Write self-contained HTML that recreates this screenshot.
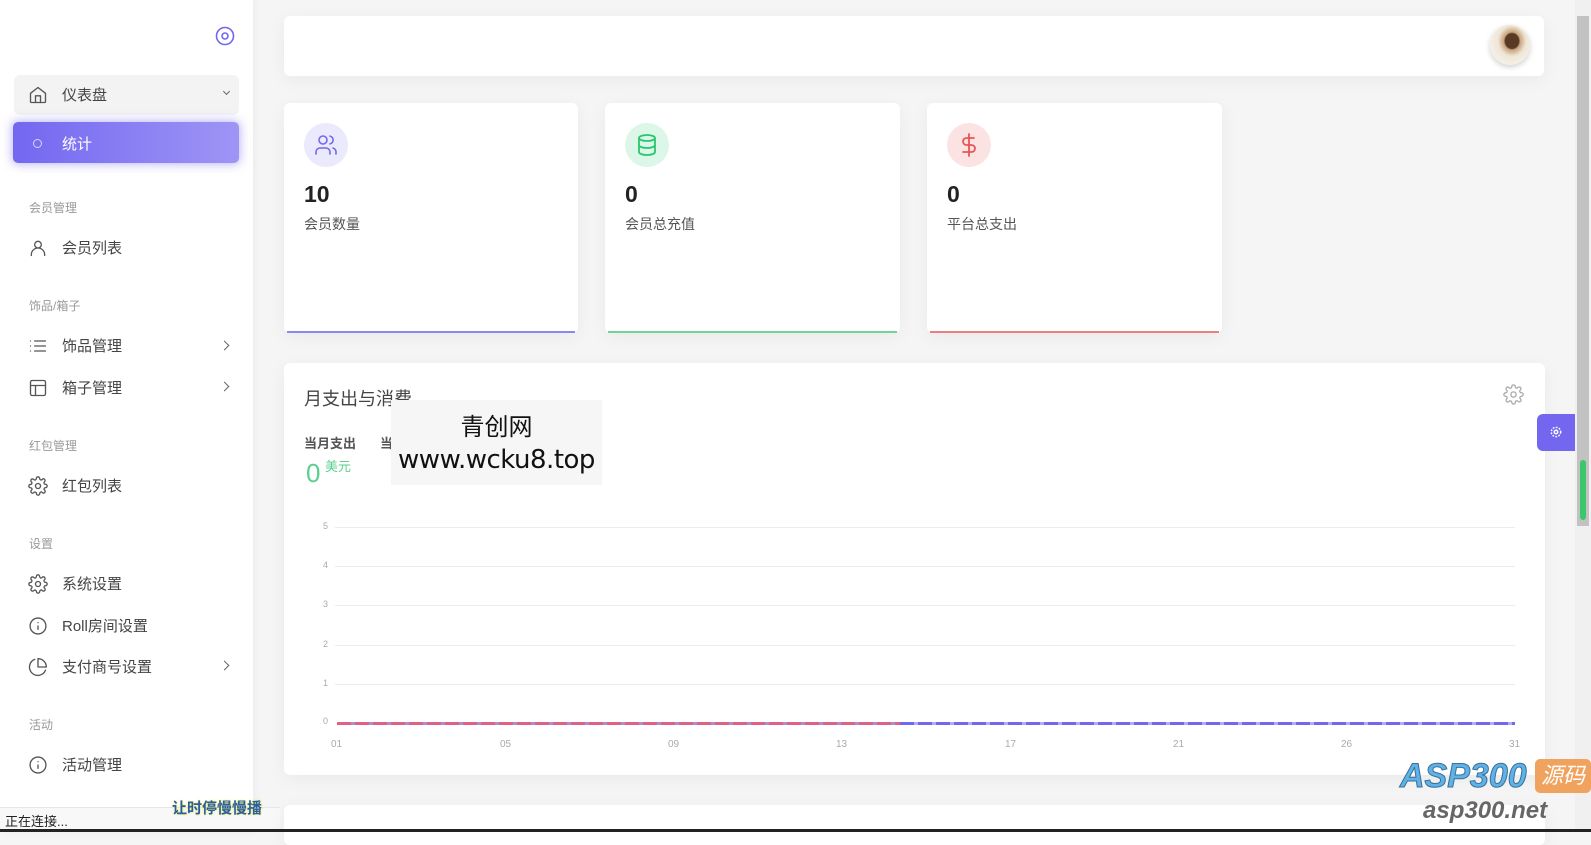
<!DOCTYPE html>
<html><head><meta charset="utf-8"><style>
*{box-sizing:border-box;margin:0;padding:0}
body{width:1591px;height:832px;overflow:hidden;background:#f5f5f6;font-family:"Liberation Sans","Noto Sans CJK SC",sans-serif;color:#444;position:relative}
.abs{position:absolute}
#side{left:0;top:0;width:253px;height:832px;background:#fff;box-shadow:2px 0 8px rgba(0,0,0,.04)}
.item{position:absolute;left:28px;font-size:15px;color:#444;display:flex;align-items:center}
.item svg{width:20px;height:20px;margin-right:14px;fill:none;stroke:#555;stroke-width:1.6;stroke-linecap:round;stroke-linejoin:round}
.sec{position:absolute;left:29px;font-size:12px;color:#999}
.chev{position:absolute;left:221px;width:7px;height:7px;border-right:1.5px solid #666;border-bottom:1.5px solid #666;transform:rotate(-45deg)}
.card{position:absolute;background:#fff;border-radius:6px;box-shadow:0 4px 18px rgba(0,0,0,.05)}
.ic{position:absolute;left:20px;top:20px;width:44px;height:44px;border-radius:50%;display:flex;align-items:center;justify-content:center}
.num{position:absolute;left:20px;top:78px;font-size:23px;font-weight:bold;color:#222}
.lab{position:absolute;left:20px;top:111px;font-size:14px;color:#555}
.bar{position:absolute;left:3px;right:3px;bottom:0;height:2px}
.yl{position:absolute;left:318px;font-size:9px;color:#aaa;width:10px;text-align:right}
.gl{position:absolute;left:335px;width:1180px;height:1px;background:#ececec}
.xl{position:absolute;top:739px;font-size:10px;color:#aaa}
</style></head><body>
<div id="side" class="abs">
 <svg class="abs" style="left:215px;top:26px" width="20" height="20" viewBox="0 0 20 20"><circle cx="10" cy="10" r="8.5" fill="none" stroke="#7367f0" stroke-width="1.6"/><circle cx="10" cy="10" r="3" fill="none" stroke="#7367f0" stroke-width="1.6"/></svg>
 <div class="abs" style="left:14px;top:75px;width:225px;height:40px;background:#f3f3f4;border-radius:6px"></div>
 <div class="item" style="top:84px"><svg viewBox="0 0 24 24"><path d="M3 10l9-7 9 7v10a1 1 0 0 1-1 1H4a1 1 0 0 1-1-1z"/><path d="M9 21v-8h6v8"/></svg>仪表盘</div>
 <div class="chev" style="top:89px;transform:rotate(45deg);width:5px;height:5px;left:224px"></div>
 <div class="abs" style="left:13px;top:122px;width:226px;height:41px;border-radius:5px;background:linear-gradient(90deg,#7367f0,#9e95f5);box-shadow:0 0 10px 1px rgba(115,103,240,.5)"></div>
 <div class="abs" style="left:33px;top:139px;width:9px;height:9px;border:1.5px solid #d9d5fb;border-radius:50%"></div>
 <div class="abs" style="left:62px;top:133px;font-size:15px;color:#fff">统计</div>
 <div class="sec" style="top:199px">会员管理</div>
 <div class="item" style="top:237px"><svg viewBox="0 0 24 24"><circle cx="12" cy="8" r="4"/><path d="M4 21v-1a7 7 0 0 1 16 0v1"/></svg>会员列表</div>
 <div class="sec" style="top:297px">饰品/箱子</div>
 <div class="item" style="top:335px"><svg viewBox="0 0 24 24"><path d="M8 6h13M8 12h13M8 18h13M3 6h.01M3 12h.01M3 18h.01"/></svg>饰品管理</div>
 <div class="chev" style="top:342px"></div>
 <div class="item" style="top:377px"><svg viewBox="0 0 24 24"><rect x="3" y="3" width="18" height="18" rx="2"/><path d="M3 9h18M9 21V9"/></svg>箱子管理</div>
 <div class="chev" style="top:383px"></div>
 <div class="sec" style="top:437px">红包管理</div>
 <div class="item" style="top:475px"><svg viewBox="0 0 24 24"><circle cx="12" cy="12" r="3"/><path d="M19.4 15a1.7 1.7 0 0 0 .3 1.8l.1.1a2 2 0 1 1-2.8 2.8l-.1-.1a1.7 1.7 0 0 0-1.8-.3 1.7 1.7 0 0 0-1 1.5V21a2 2 0 1 1-4 0v-.1a1.7 1.7 0 0 0-1.1-1.5 1.7 1.7 0 0 0-1.8.3l-.1.1a2 2 0 1 1-2.8-2.8l.1-.1a1.7 1.7 0 0 0 .3-1.8 1.7 1.7 0 0 0-1.5-1H3a2 2 0 1 1 0-4h.1a1.7 1.7 0 0 0 1.5-1.1 1.7 1.7 0 0 0-.3-1.8l-.1-.1a2 2 0 1 1 2.8-2.8l.1.1a1.7 1.7 0 0 0 1.8.3H9a1.7 1.7 0 0 0 1-1.5V3a2 2 0 1 1 4 0v.1a1.7 1.7 0 0 0 1 1.5 1.7 1.7 0 0 0 1.8-.3l.1-.1a2 2 0 1 1 2.8 2.8l-.1.1a1.7 1.7 0 0 0-.3 1.8V9a1.7 1.7 0 0 0 1.5 1H21a2 2 0 1 1 0 4h-.1a1.7 1.7 0 0 0-1.5 1z"/></svg>红包列表</div>
 <div class="sec" style="top:535px">设置</div>
 <div class="item" style="top:573px"><svg viewBox="0 0 24 24"><circle cx="12" cy="12" r="3"/><path d="M19.4 15a1.7 1.7 0 0 0 .3 1.8l.1.1a2 2 0 1 1-2.8 2.8l-.1-.1a1.7 1.7 0 0 0-1.8-.3 1.7 1.7 0 0 0-1 1.5V21a2 2 0 1 1-4 0v-.1a1.7 1.7 0 0 0-1.1-1.5 1.7 1.7 0 0 0-1.8.3l-.1.1a2 2 0 1 1-2.8-2.8l.1-.1a1.7 1.7 0 0 0 .3-1.8 1.7 1.7 0 0 0-1.5-1H3a2 2 0 1 1 0-4h.1a1.7 1.7 0 0 0 1.5-1.1 1.7 1.7 0 0 0-.3-1.8l-.1-.1a2 2 0 1 1 2.8-2.8l.1.1a1.7 1.7 0 0 0 1.8.3H9a1.7 1.7 0 0 0 1-1.5V3a2 2 0 1 1 4 0v.1a1.7 1.7 0 0 0 1 1.5 1.7 1.7 0 0 0 1.8-.3l.1-.1a2 2 0 1 1 2.8 2.8l-.1.1a1.7 1.7 0 0 0-.3 1.8V9a1.7 1.7 0 0 0 1.5 1H21a2 2 0 1 1 0 4h-.1a1.7 1.7 0 0 0-1.5 1z"/></svg>系统设置</div>
 <div class="item" style="top:615px"><svg viewBox="0 0 24 24"><circle cx="12" cy="12" r="9.5"/><path d="M12 16v-4M12 8h.01"/></svg>Roll房间设置</div>
 <div class="item" style="top:656px"><svg viewBox="0 0 24 24"><path d="M21 15.9A10 10 0 1 1 8 2.8"/><path d="M22 12A10 10 0 0 0 12 2v10z"/></svg>支付商号设置</div>
 <div class="chev" style="top:662px"></div>
 <div class="sec" style="top:716px">活动</div>
 <div class="item" style="top:754px"><svg viewBox="0 0 24 24"><circle cx="12" cy="12" r="9.5"/><path d="M12 16v-4M12 8h.01"/></svg>活动管理</div>
</div>
<div class="abs" style="left:0;top:807px;width:280px;height:22px;background:#f8f8f8;border-top:1px solid #e6e6e6;font-size:13px;color:#222;padding:3px 5px">正在连接...</div>
<div class="abs" style="left:172px;top:797px;font-size:15px;font-weight:bold;color:#2a5da8;text-shadow:0 0 2px #ee3">让时停慢慢播</div>

<div class="card" style="left:284px;top:16px;width:1260px;height:60px"></div>
<div class="abs" style="left:1490px;top:25px;width:40px;height:40px;border-radius:50%;background:radial-gradient(ellipse at 55% 40%,#5a3a25 0 22%,#c9a27c 26%,#efe6d6 45%,#f4efe6 70%);box-shadow:0 2px 6px rgba(0,0,0,.2)"></div>

<div class="card" style="left:284px;top:103px;width:294px;height:230px">
 <div class="ic" style="background:#ebe9fc"><svg width="24" height="24" viewBox="0 0 24 24" fill="none" stroke="#7367f0" stroke-width="1.6" stroke-linecap="round"><circle cx="9" cy="7" r="4"/><path d="M2 21v-2a4 4 0 0 1 4-4h6a4 4 0 0 1 4 4v2M16 3.1a4 4 0 0 1 0 7.8M22 21v-2a4 4 0 0 0-3-3.9"/></svg></div>
 <div class="num">10</div><div class="lab">会员数量</div><div class="bar" style="background:#8f87ef"></div></div>
<div class="card" style="left:605px;top:103px;width:295px;height:230px">
 <div class="ic" style="background:#dcf6e8"><svg width="24" height="24" viewBox="0 0 24 24" fill="none" stroke="#28c76f" stroke-width="1.8"><ellipse cx="12" cy="5" rx="8" ry="3"/><path d="M4 5v14c0 1.7 3.6 3 8 3s8-1.3 8-3V5M4 12c0 1.7 3.6 3 8 3s8-1.3 8-3"/></svg></div>
 <div class="num">0</div><div class="lab">会员总充值</div><div class="bar" style="background:#6fd39b"></div></div>
<div class="card" style="left:927px;top:103px;width:295px;height:230px">
 <div class="ic" style="background:#fbe3e4"><svg width="24" height="24" viewBox="0 0 24 24" fill="none" stroke="#ea5455" stroke-width="1.8" stroke-linecap="round"><path d="M12 1v22M17 5H9.5a3.5 3.5 0 0 0 0 7h5a3.5 3.5 0 0 1 0 7H6"/></svg></div>
 <div class="num">0</div><div class="lab">平台总支出</div><div class="bar" style="background:#ec7f7f"></div></div>

<div class="card" style="left:284px;top:363px;width:1261px;height:412px"></div>
<div class="abs" style="left:304px;top:385px;font-size:18px;color:#444">月支出与消费</div>
<svg class="abs" style="left:1503px;top:384px" width="21" height="21" viewBox="0 0 24 24" fill="none" stroke="#aaa" stroke-width="1.5"><circle cx="12" cy="12" r="3"/><path d="M19.4 15a1.7 1.7 0 0 0 .3 1.8l.1.1a2 2 0 1 1-2.8 2.8l-.1-.1a1.7 1.7 0 0 0-1.8-.3 1.7 1.7 0 0 0-1 1.5V21a2 2 0 1 1-4 0v-.1a1.7 1.7 0 0 0-1.1-1.5 1.7 1.7 0 0 0-1.8.3l-.1.1a2 2 0 1 1-2.8-2.8l.1-.1a1.7 1.7 0 0 0 .3-1.8 1.7 1.7 0 0 0-1.5-1H3a2 2 0 1 1 0-4h.1a1.7 1.7 0 0 0 1.5-1.1 1.7 1.7 0 0 0-.3-1.8l-.1-.1a2 2 0 1 1 2.8-2.8l.1.1a1.7 1.7 0 0 0 1.8.3H9a1.7 1.7 0 0 0 1-1.5V3a2 2 0 1 1 4 0v.1a1.7 1.7 0 0 0 1 1.5 1.7 1.7 0 0 0 1.8-.3l.1-.1a2 2 0 1 1 2.8 2.8l-.1.1a1.7 1.7 0 0 0-.3 1.8V9a1.7 1.7 0 0 0 1.5 1H21a2 2 0 1 1 0 4h-.1a1.7 1.7 0 0 0-1.5 1z"/></svg>
<div class="abs" style="left:304px;top:433px;font-size:13px;font-weight:bold;color:#555">当月支出</div>
<div class="abs" style="left:380px;top:433px;font-size:13px;font-weight:bold;color:#555">当</div>
<div class="abs" style="left:306px;top:458px;font-size:26px;color:#5ccf8f">0</div>
<div class="abs" style="left:325px;top:456px;font-size:13px;color:#5ccf8f">美元</div>
<div class="abs" style="left:391px;top:400px;width:211px;height:85px;background:#f6f6f6"></div>
<div class="abs" style="left:391px;top:407px;width:211px;text-align:center;font-size:24px;color:#111;font-family:'Noto Sans CJK SC',sans-serif">青创网</div>
<div class="abs" style="left:391px;top:445px;width:211px;text-align:center;font-size:26px;color:#111;font-family:'DejaVu Sans',sans-serif;letter-spacing:-0.5px">www.wcku8.top</div>

<div class="gl" style="top:527px"></div><div class="yl" style="top:521px">5</div>
<div class="gl" style="top:566px"></div><div class="yl" style="top:560px">4</div>
<div class="gl" style="top:605px"></div><div class="yl" style="top:599px">3</div>
<div class="gl" style="top:645px"></div><div class="yl" style="top:639px">2</div>
<div class="gl" style="top:684px"></div><div class="yl" style="top:678px">1</div>
<div class="yl" style="top:716px">0</div>
<div class="abs" style="left:337px;top:722px;width:1178px;height:3px;background:repeating-linear-gradient(90deg,#e0608a 0 14px,#a78fe0 14px 18px)"></div>
<div class="abs" style="left:900px;top:722px;width:615px;height:3px;background:repeating-linear-gradient(90deg,#7367f0 0 14px,#b4acf6 14px 18px)"></div>
<div class="xl" style="left:331px">01</div><div class="xl" style="left:500px">05</div><div class="xl" style="left:668px">09</div><div class="xl" style="left:836px">13</div><div class="xl" style="left:1005px">17</div><div class="xl" style="left:1173px">21</div><div class="xl" style="left:1341px">26</div><div class="xl" style="left:1509px">31</div>

<div class="card" style="left:284px;top:805px;width:1261px;height:40px"></div>
<div class="abs" style="left:1537px;top:414px;width:38px;height:37px;background:#7367f0;border-radius:6px 0 0 6px"></div>
<svg class="abs" style="left:1549px;top:425px" width="14" height="14" viewBox="0 0 24 24" fill="none" stroke="#fff" stroke-width="2.5"><circle cx="12" cy="12" r="3"/><circle cx="12" cy="12" r="8" stroke-dasharray="3 2.3"/></svg>
<div class="abs" style="left:1575px;top:0;width:16px;height:832px;background:#f0f0f0"></div>
<div class="abs" style="left:1577px;top:16px;width:12px;height:510px;background:#c2c2c2"></div>
<div class="abs" style="left:1580px;top:460px;width:6px;height:60px;background:#3cc76a;border-radius:3px"></div>
<div class="abs" style="left:1400px;top:757px;font-size:34px;font-weight:bold;font-style:italic;color:#5fb2e6;-webkit-text-stroke:1px #3a6f9a">ASP300</div>
<div class="abs" style="left:1535px;top:759px;width:56px;height:34px;background:#f0a35e;border-radius:5px;color:#fff;font-size:22px;font-style:italic;text-align:center;line-height:34px">源码</div>
<div class="abs" style="left:1423px;top:797px;font-size:24px;font-weight:bold;font-style:italic;color:#666">asp300.net</div>
<div class="abs" style="left:0;top:829px;width:1591px;height:3px;background:#222"></div>
</body></html>
